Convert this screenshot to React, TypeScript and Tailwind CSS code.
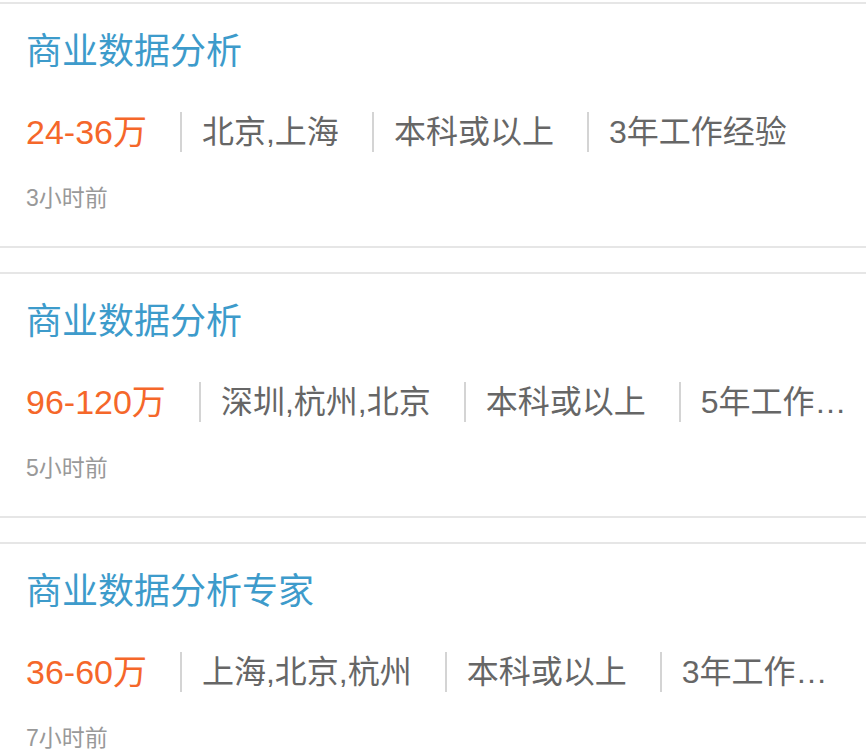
const jobs = [
  {
    title: "商业数据分析",
    salary: "24-36万",
    tags: ["北京,上海", "本科或以上", "3年工作经验"],
    time: "3小时前",
  },
  {
    title: "商业数据分析",
    salary: "96-120万",
    tags: ["深圳,杭州,北京", "本科或以上", "5年工作经验"],
    time: "5小时前",
  },
  {
    title: "商业数据分析专家",
    salary: "36-60万",
    tags: ["上海,北京,杭州", "本科或以上", "3年工作经验"],
    time: "7小时前",
  },
];

const font = { fontFamily: '"Liberation Sans", "Noto Sans CJK SC", sans-serif' };

const JobCard = ({ job }: { job: (typeof jobs)[number] }) => (
  <div className="border-y-2 border-[#e6e6e6] bg-white pl-[26px] pr-[19px] pt-[30px] pb-[37px]">
    <h2 className="text-[36px] leading-[36px] text-[#3d9bcb] whitespace-nowrap">
      {job.title}
    </h2>
    <div className="mt-[42px] flex items-center text-[32px] leading-[40px] whitespace-nowrap">
      <span className="shrink-0 text-[34px] text-[#f5672a]">{job.salary}</span>
      {job.tags.map((t, i) => (
        <span
          key={t}
          className={`ml-[33px] border-l-2 border-[#d4d4d4] pl-[20px] text-[#666666] ${
            i === job.tags.length - 1 ? "min-w-0 truncate" : "shrink-0"
          }`}
        >
          {t}
        </span>
      ))}
    </div>
    <p className="mt-[35px] text-[23px] leading-[22px] text-[#999999]">{job.time}</p>
  </div>
);

export default function App() {
  return (
    <div className="min-h-screen w-[866px] overflow-hidden bg-white pt-[2px]" style={font}>
      <div className="flex flex-col gap-[24px]">
        {jobs.map((j, i) => (
          <JobCard key={i} job={j} />
        ))}
      </div>
    </div>
  );
}
